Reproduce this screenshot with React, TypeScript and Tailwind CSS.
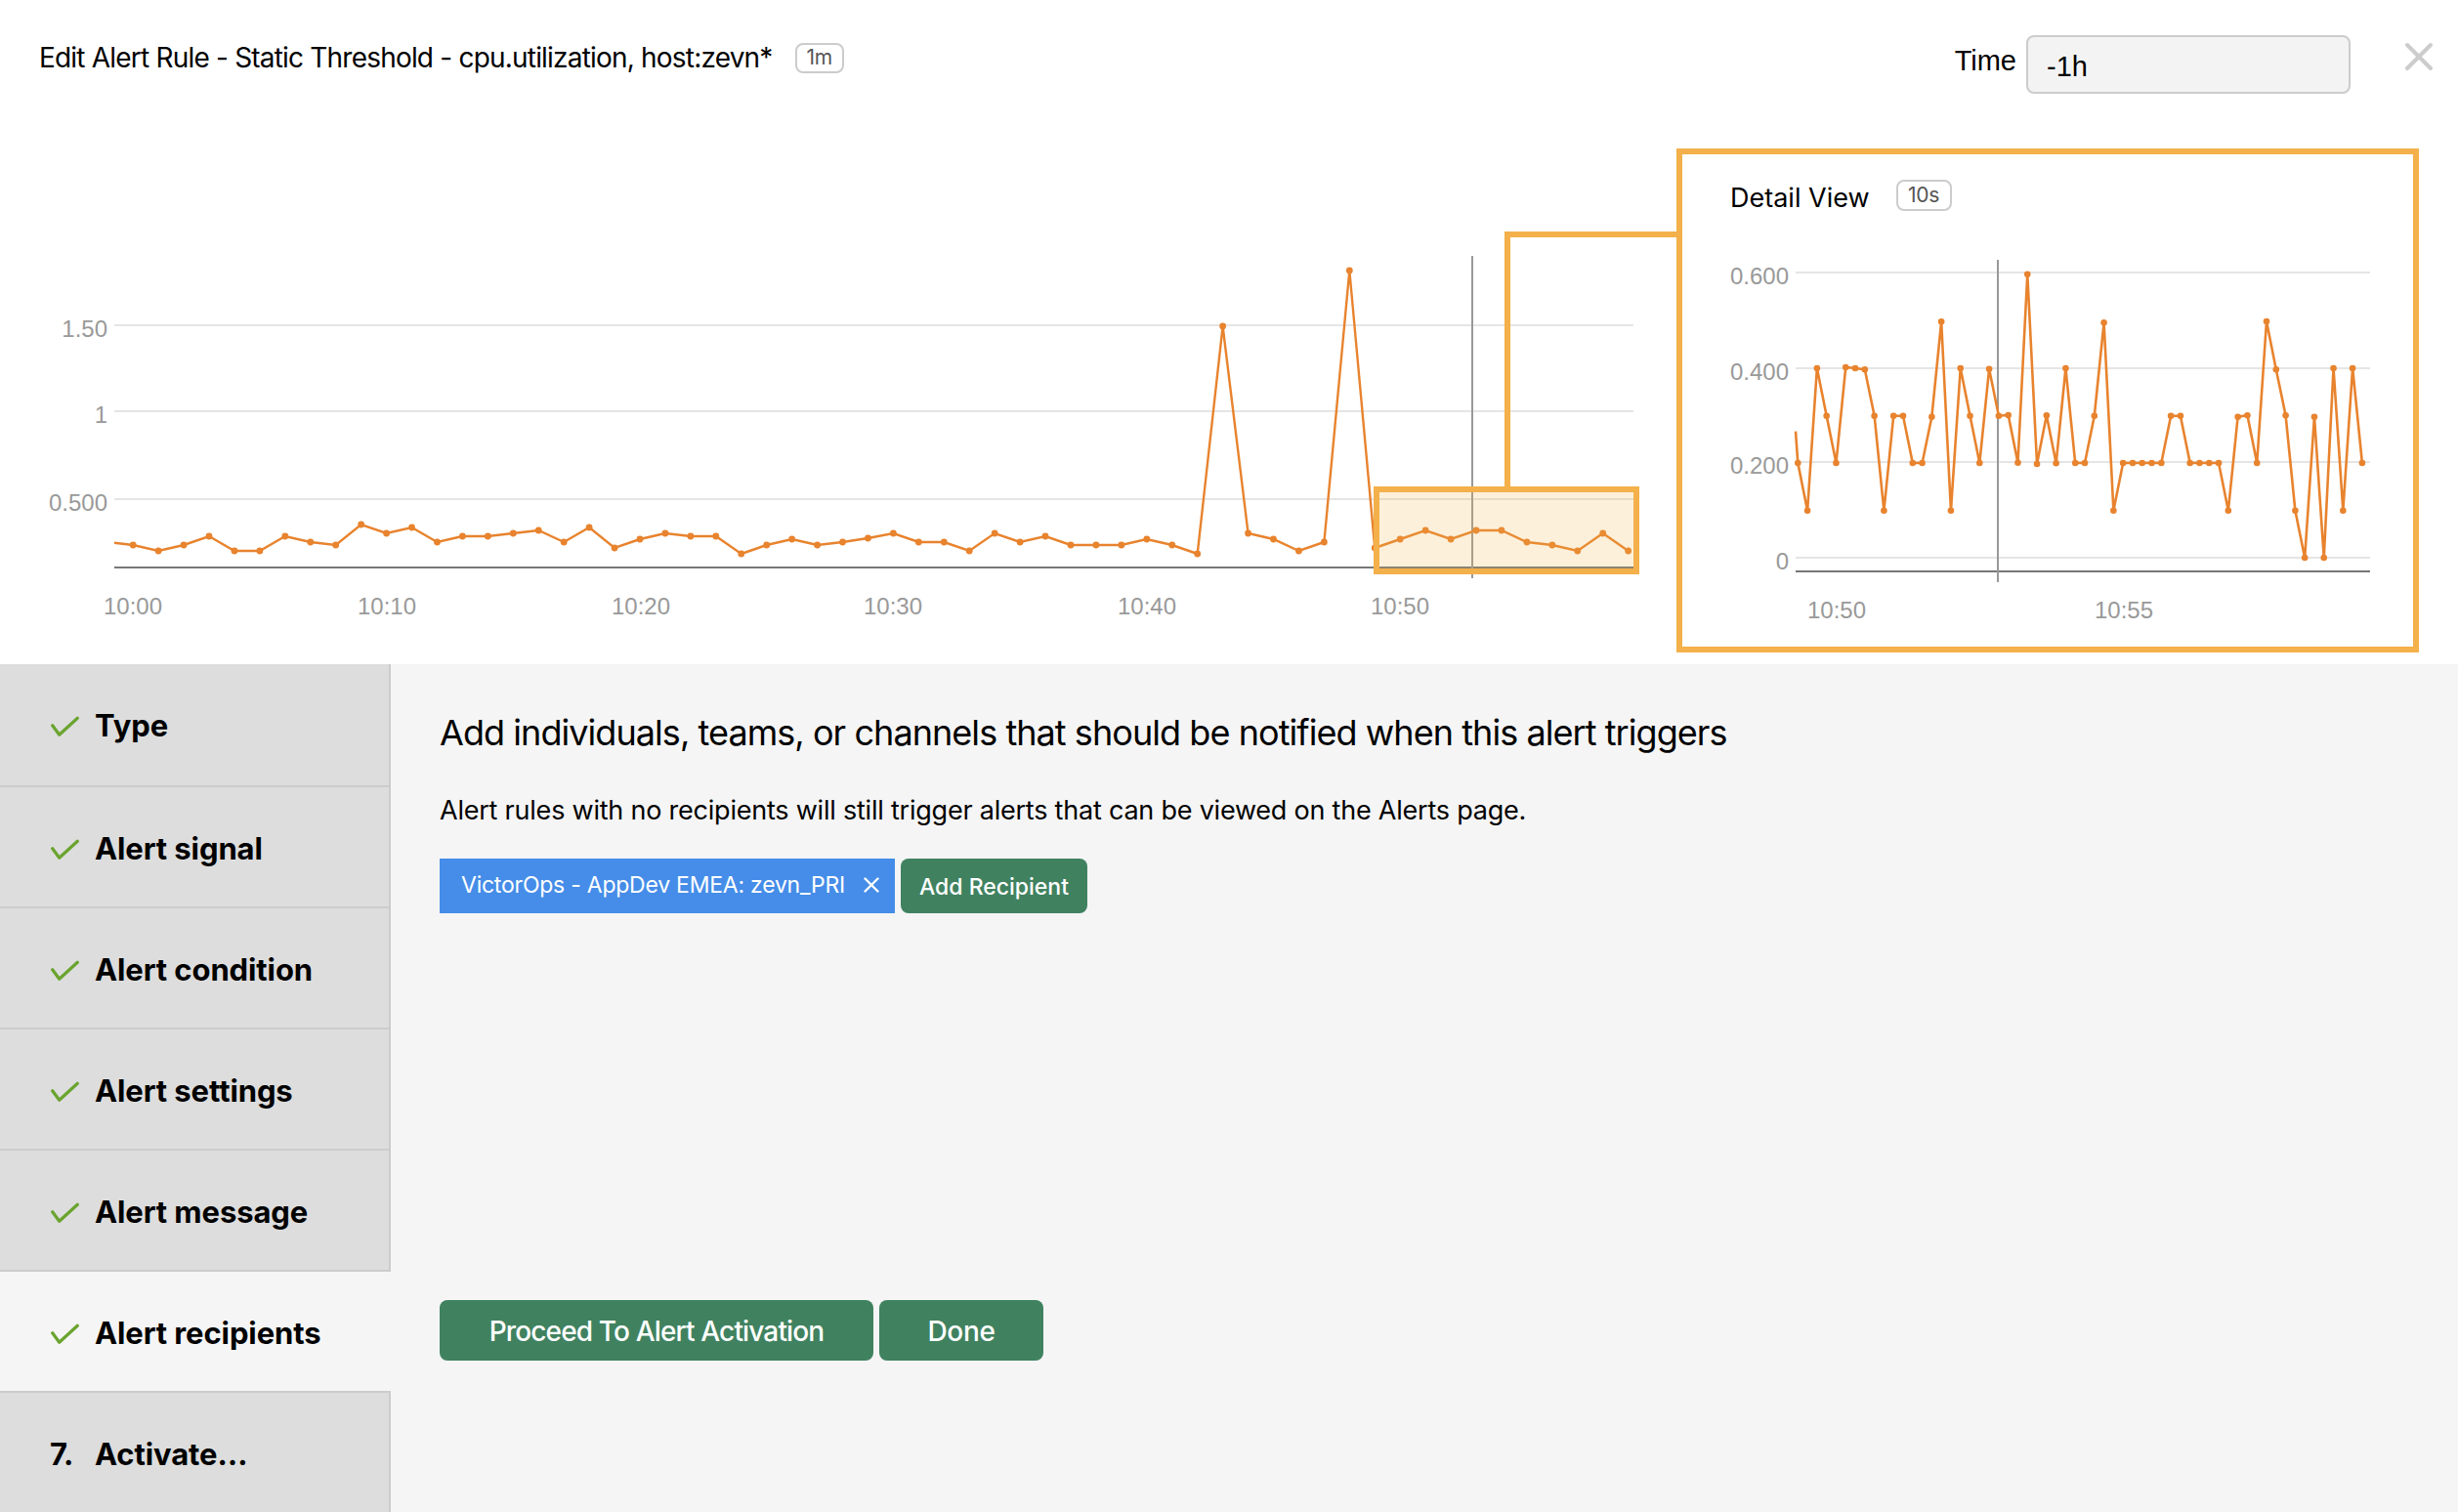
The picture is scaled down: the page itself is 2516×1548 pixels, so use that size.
import { X } from "lucide-react"

const mainSeries = [
  558, 564, 558, 549, 564, 564, 549, 555, 558, 537, 546, 540, 555, 549, 549, 546, 543, 555, 540, 561,
  552, 546, 549, 549, 567, 558, 552, 558, 555, 551, 546, 555, 555, 564, 546, 555, 549, 558, 558, 558,
  552, 558, 567, 334, 546, 552, 564, 555, 277, 561, 552, 543, 552, 543, 543, 555, 558, 564, 546, 564,
]

const detailSeries = [
  474, 522.7, 377, 425.7, 474, 376, 377, 378.3, 425.7, 522.7, 425.7, 425.7, 474, 474, 426.7, 329.3, 522.7, 377, 425.7, 474,
  377.7, 425.7, 425, 473.7, 280.7, 475, 425.3, 474.3, 377, 474, 474, 425.7, 330.3, 522.7, 474, 474, 474, 474, 474, 425.7,
  425.7, 474, 474, 474, 474, 522.7, 426.7, 425.3, 474, 329, 378.3, 425.3, 522.7, 571, 426.7, 571, 377, 522.7, 377, 474,
]

const mainPoints = mainSeries.map((y, i) => [136.2 + i * 25.94, y])
const detailPoints = detailSeries.map((y, i) => [1840.3 + i * 9.79, y])

const toLine = (points: number[][]) => points.map(([x, y]) => `${x},${y}`).join(" ")

const steps = [
  { label: "Type", done: true },
  { label: "Alert signal", done: true },
  { label: "Alert condition", done: true },
  { label: "Alert settings", done: true },
  { label: "Alert message", done: true },
  { label: "Alert recipients", done: true, active: true },
  { label: "Activate…", done: false },
]

function Badge({ text, className }: { text: string; className: string }) {
  return (
    <span
      className={`flex items-center justify-center rounded-lg border-2 border-[#cccccc] text-[21px] tracking-[-0.3px] text-[#555555] ${className}`}>
      {text}
    </span>
  )
}

function MainChart() {
  return (
    <svg viewBox="0 152 1716 528" className="h-[528px] w-[1716px] shrink-0 font-['Liberation_Sans',sans-serif]">
      {[333, 421, 511].map((y) => (
        <line key={y} x1="117" x2="1672" y1={y} y2={y} stroke="#e5e5e5" strokeWidth="2" />
      ))}
      <line x1="117" x2="1672" y1="581" y2="581" stroke="#777777" strokeWidth="2" />
      {[
        ["1.50", 336],
        ["1", 424],
        ["0.500", 514],
      ].map(([t, y]) => (
        <text key={t} x="110" y={y} dy="8.5" textAnchor="end" fontSize="24" fill="#999999">
          {t}
        </text>
      ))}
      {[
        ["10:00", 136],
        ["10:10", 396],
        ["10:20", 656],
        ["10:30", 914],
        ["10:40", 1174],
        ["10:50", 1433],
      ].map(([t, x]) => (
        <text key={t} x={x} y="628.5" textAnchor="middle" fontSize="24" fill="#999999">
          {t}
        </text>
      ))}
      <line x1="1507" x2="1507" y1="262" y2="592" stroke="#999999" strokeWidth="2" />
      <polyline points={`117,555.7 ${toLine(mainPoints)}`} fill="none" stroke="#e8832e" strokeWidth="2.4" />
      {mainPoints.map(([x, y]) => (
        <circle key={x} cx={x} cy={y} r="3.4" fill="#e8832e" />
      ))}
      <polyline points="1543,498 1543,240 1716,240" fill="none" stroke="#f4b04a" strokeWidth="6" />
      <rect x="1406" y="498" width="272" height="90" fill="#efb24a" fillOpacity="0.2" />
      <rect x="1409" y="501" width="266" height="84" fill="none" stroke="#f4b04a" strokeWidth="6" />
    </svg>
  )
}

function DetailChart() {
  return (
    <svg viewBox="1722 226 748 436" className="h-[436px] w-[748px] font-['Liberation_Sans',sans-serif]">
      {[279, 377, 473, 571].map((y) => (
        <line key={y} x1="1838" x2="2426" y1={y} y2={y} stroke="#e5e5e5" strokeWidth="2" />
      ))}
      <line x1="1838" x2="2426" y1="585" y2="585" stroke="#777777" strokeWidth="2" />
      {[
        ["0.600", 282],
        ["0.400", 380],
        ["0.200", 476],
        ["0", 574],
      ].map(([t, y]) => (
        <text key={t} x="1831" y={y} dy="8.5" textAnchor="end" fontSize="24" fill="#999999">
          {t}
        </text>
      ))}
      <text x="1880" y="632.5" textAnchor="middle" fontSize="24" fill="#999999">
        10:50
      </text>
      <text x="2174" y="632.5" textAnchor="middle" fontSize="24" fill="#999999">
        10:55
      </text>
      <line x1="2045" x2="2045" y1="266" y2="596" stroke="#999999" strokeWidth="2" />
      <polyline points={`1838,441.7 ${toLine(detailPoints)}`} fill="none" stroke="#e8832e" strokeWidth="2.6" />
      {detailPoints.map(([x, y]) => (
        <circle key={x} cx={x} cy={y} r="3.3" fill="#e8832e" />
      ))}
    </svg>
  )
}

function StepRow({ label, done, active, index }: { label: string; done: boolean; active?: boolean; index: number }) {
  const last = index === steps.length - 1
  return (
    <div
      className={`flex items-start pl-[51px] pt-[43px] text-[31px] font-bold leading-[40px] tracking-[-0.1px] text-black ${
        index === 0 ? "h-[126px]" : last ? "h-[122px]" : "h-[124px]"
      } ${active ? "bg-[#f5f5f5]" : "border-r-2 border-[#cccccc] bg-[#dddddd]"} ${
        last ? "" : "border-b-2 border-b-[#cccccc]"
      }`}>
      <span className="flex h-[40px] w-[46px] shrink-0 items-center">
        {done ? (
          <svg viewBox="0 0 30 30" className="-mt-[2px] h-[30px] w-[30px]">
            <polyline
              points="2.7,15.7 9.7,25.3 28.3,8.3"
              fill="none"
              stroke="#6aa42f"
              strokeWidth="3.2"
              strokeLinecap="round"
              strokeLinejoin="round"
            />
          </svg>
        ) : (
          "7."
        )}
      </span>
      {label}
    </div>
  )
}

export default function App() {
  return (
    <div className="h-[1548px] w-[2516px] overflow-hidden bg-white font-['Inter',sans-serif] text-black">
      <div className="flex h-[152px] items-start justify-between pl-[40px]">
        <div className="mt-[43px] flex items-center gap-[23px]">
          <h1 className="text-[28px] leading-[32px] tracking-[-0.8px]">Edit Alert Rule - Static Threshold - cpu.utilization, host:zevn*</h1>
          <Badge text="1m" className="h-[31px] w-[50px]" />
        </div>
        <div className="mr-[16px] mt-[36px] flex items-start font-['Liberation_Sans',sans-serif]">
          <span className="mr-[10px] mt-[9px] text-[29px] leading-[34px]">Time</span>
          <div className="flex h-[60px] w-[332px] items-center rounded-lg border-2 border-[#cccccc] bg-[#f3f3f3] pl-[19px] pt-[6px] text-[29px]">
            -1h
          </div>
          <X className="-mt-[2px] ml-[46px] h-[48px] w-[48px] text-[#cccccc]" strokeWidth={2} />
        </div>
      </div>

      <div className="flex h-[528px] items-start">
        <MainChart />
        <div className="h-[516px] w-[760px] border-[6px] border-[#f4b04a]">
          <div className="flex h-[68px] items-start pl-[49px] pt-[26px]">
            <span className="mt-[1px] text-[27px] leading-[36px]">Detail View</span>
            <Badge text="10s" className="ml-[27px] h-[32px] w-[57px]" />
          </div>
          <DetailChart />
        </div>
      </div>

      <div className="flex h-[868px]">
        <div className="w-[400px] shrink-0">
          {steps.map((s, i) => (
            <StepRow key={s.label} index={i} label={s.label} done={s.done} active={s.active} />
          ))}
        </div>
        <div className="flex-1 bg-[#f5f5f5] pl-[50px]">
          <h2 className="mt-[48px] text-[36px] leading-[44px] tracking-[-0.94px]">Add individuals, teams, or channels that should be notified when this alert triggers</h2>
          <p className="mt-[41px] text-[27px] leading-[34px] tracking-[-0.22px]">Alert rules with no recipients will still trigger alerts that can be viewed on the Alerts page.</p>
          <div className="mt-[32px] flex gap-[6px]">
            <div className="flex h-[56px] w-[466px] items-center bg-[#458de8] pb-[2px] pl-[22px] text-[23px] tracking-[-0.24px] text-white">
              VictorOps - AppDev EMEA: zevn_PRI
              <X className="ml-[14px] h-[26px] w-[26px]" strokeWidth={2.2} />
            </div>
            <button className="flex h-[56px] w-[191px] items-center justify-center rounded-lg bg-[#408260] pt-[3px] text-[23px] font-medium text-white">
              Add Recipient
            </button>
          </div>
          <div className="mt-[396px] flex gap-[6px]">
            <button className="h-[62px] w-[444px] rounded-lg bg-[#408260] pt-[2px] text-[28px] font-medium tracking-[-0.85px] text-white">
              Proceed To Alert Activation
            </button>
            <button className="h-[62px] w-[168px] rounded-lg bg-[#408260] pt-[2px] text-[28px] font-medium tracking-[-0.3px] text-white">
              Done
            </button>
          </div>
        </div>
      </div>
    </div>
  )
}
